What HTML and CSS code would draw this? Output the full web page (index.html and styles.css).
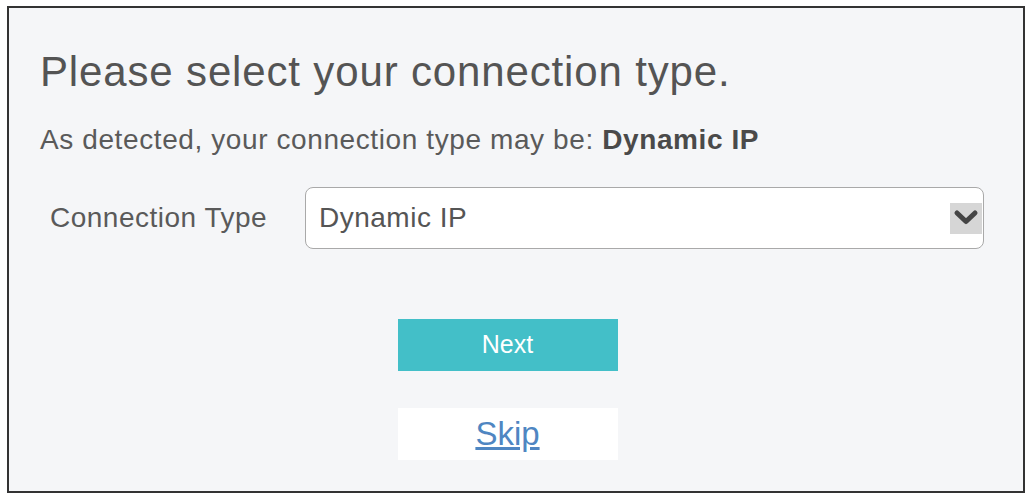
FILE: index.html
```html
<!DOCTYPE html>
<html>
<head>
<meta charset="utf-8">
<link rel="stylesheet" href="styles.css">
</head>
<body>
<div class="frame">
  <h1 class="title">Please select your connection type.</h1>
  <p class="detected">As detected, your connection type may be: <b>Dynamic IP</b></p>
  <div class="row">
    <span class="label">Connection Type</span>
    <div class="select">
      <span class="value">Dynamic IP</span>
      <span class="arrow">
        <svg width="26" height="18" viewBox="0 0 26 18"><path d="M4 4 L13 12.5 L22 4" fill="none" stroke="#444" stroke-width="5" stroke-linecap="round" stroke-linejoin="round"/></svg>
      </span>
    </div>
  </div>
  <div class="actions">
    <button class="next">Next</button>
    <div class="skip"><a href="#">Skip</a></div>
  </div>
</div>
</body>
</html>
```
FILE: styles.css
```css
html, body {
  margin: 0;
  padding: 0;
  background: #ffffff;
}
body {
  padding: 6px 4px 4px 7px;
  font-family: "Liberation Sans", Arial, sans-serif;
}
.frame {
  box-sizing: border-box;
  width: 1018px;
  height: 487px;
  border: 2px solid #333333;
  background: #f5f6f8;
  padding: 0 0 0 31px;
}
.title {
  margin: 40px 0 0 0;
  font-size: 42px;
  letter-spacing: 0.85px;
  font-weight: normal;
  color: #545454;
  line-height: 48px;
}
.detected {
  margin: 28px 0 0 0;
  font-size: 28px;
  letter-spacing: 0.6px;
  color: #5a5a5a;
  line-height: 32px;
}
.detected b {
  color: #4a4a4a;
}
.row {
  display: flex;
  align-items: center;
  margin-top: 31px;
}
.label {
  width: 255px;
  padding-left: 10px;
  font-size: 28px;
  letter-spacing: 0.5px;
  color: #5a5a5a;
}
.select {
  box-sizing: border-box;
  width: 679px;
  height: 62px;
  background: #ffffff;
  border: 1.5px solid #a9a9a9;
  border-radius: 8px;
  display: flex;
  align-items: center;
  justify-content: space-between;
  padding: 0 1px 0 13px;
}
.value {
  font-size: 28px;
  letter-spacing: 0.5px;
  color: #555555;
}
.arrow {
  width: 32px;
  height: 31px;
  background: #d6d6d6;
  display: flex;
  align-items: center;
  justify-content: center;
}
.actions {
  display: flex;
  flex-direction: column;
  align-items: center;
  width: 935px;
  margin-top: 70px;
}
.next {
  width: 220px;
  height: 52px;
  border: none;
  background: #43bfc8;
  color: #ffffff;
  font-family: "Liberation Sans", Arial, sans-serif;
  font-size: 25px;
  padding: 0 0 2px 0;
}
.skip {
  margin-top: 37px;
  width: 220px;
  height: 52px;
  background: #ffffff;
  display: flex;
  align-items: center;
  justify-content: center;
}
.skip a {
  color: #4f86c2;
  font-size: 33px;
  text-decoration: underline;
}
```
